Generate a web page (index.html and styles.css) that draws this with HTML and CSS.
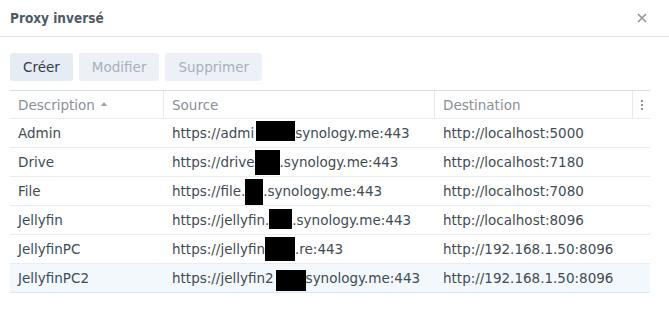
FILE: index.html
```html
<html>
<head>
  <title>Proxy inversé</title>
  <link rel="stylesheet" href="styles.css">
</head>
<body>
  <div class="dialog">
    <div class="header">
      <span class="title">Proxy inversé</span>
      <span class="close">
        <svg width="10" height="10" viewBox="0 0 10 10"><path d="M1 1L9 9M9 1L1 9" stroke="#8d939b" stroke-width="1.6"/></svg>
      </span>
    </div>

    <div class="toolbar">
      <button class="btn">Créer</button>
      <button class="btn disabled">Modifier</button>
      <button class="btn disabled">Supprimer</button>
    </div>

    <div class="grid">
      <div class="row head">
        <div class="cell c1">Description <span class="sort"></span></div>
        <div class="cell c2">Source</div>
        <div class="cell c3">Destination</div>
        <div class="cell c4"><span class="dots"><i></i><i></i><i></i></span></div>
      </div>
      <div class="row">
        <div class="cell c1">Admin</div>
        <div class="cell c2">https://admi<span class="mask m1"></span>synology.me:443</div>
        <div class="cell c3">http://localhost:5000</div>
        <div class="cell c4"></div>
      </div>
      <div class="row">
        <div class="cell c1">Drive</div>
        <div class="cell c2">https://drive<span class="mask m2"></span>.synology.me:443</div>
        <div class="cell c3">http://localhost:7180</div>
        <div class="cell c4"></div>
      </div>
      <div class="row">
        <div class="cell c1">File</div>
        <div class="cell c2">https://file.<span class="mask m3"></span>.synology.me:443</div>
        <div class="cell c3">http://localhost:7080</div>
        <div class="cell c4"></div>
      </div>
      <div class="row">
        <div class="cell c1">Jellyfin</div>
        <div class="cell c2">https://jellyfin.<span class="mask m4"></span>.synology.me:443</div>
        <div class="cell c3">http://localhost:8096</div>
        <div class="cell c4"></div>
      </div>
      <div class="row">
        <div class="cell c1">JellyfinPC</div>
        <div class="cell c2">https://jellyfin<span class="mask m5"></span>.re:443</div>
        <div class="cell c3">http://192.168.1.50:8096</div>
        <div class="cell c4"></div>
      </div>
      <div class="row selected">
        <div class="cell c1">JellyfinPC2</div>
        <div class="cell c2">https://jellyfin2<span class="mask m6"></span>synology.me:443</div>
        <div class="cell c3">http://192.168.1.50:8096</div>
        <div class="cell c4"></div>
      </div>
    </div>
  </div>
</body>
</html>
```

FILE: styles.css
```css
html, body { margin:0; padding:0; background:#fff; }

body { font-family:"DejaVu Sans", Verdana, sans-serif; font-size:13.5px; color:#414b55; }

.dialog { width:669px; height:315px; }

.header {
  height:37px;
  border-bottom:1px solid #dde4ec;
  display:flex;
  align-items:center;
  justify-content:space-between;
  padding:0 22px 0 10px;
  box-sizing:border-box;
}
.title { font-family:"DejaVu Sans Condensed", "DejaVu Sans", sans-serif; font-weight:bold; font-size:13.5px; color:#505a64; }
.close { display:flex; width:10px; height:10px; }

.toolbar { display:flex; gap:6px; padding:16px 10px 0 10px; height:28px; }
.btn {
  font-family:"DejaVu Sans", sans-serif;
  font-size:13.5px;
  height:28px;
  border:none;
  border-radius:3px;
  background:#e6ecf4;
  color:#333c46;
  padding:0 13px;
}
.btn.disabled { color:#a8b0ba; background:#edf1f7; }

.grid { margin:9px 19px 0 10px; border-top:1px solid #d5e0eb; }
.row { display:flex; height:28px; border-bottom:1px solid #e9edf2; align-items:center; }
.row.head { height:27px; color:#8a9099; }
.row.selected { background:#f3f8fd; border-bottom-color:#dde7f1; }
.cell { box-sizing:border-box; padding-left:8px; white-space:nowrap; height:100%; display:flex; align-items:center; }
.c1 { width:154px; }
.c2 { width:271px; }
.c3 { width:198px; }
.c4 { width:17px; padding-left:0; justify-content:center; }
.head .cell { border-right:1px solid #e6ebf0; }
.head .c4 { border-right:none; }

.sort {
  display:inline-block;
  width:0; height:0;
  margin-left:6px;
  border-left:3px solid transparent;
  border-right:3px solid transparent;
  border-bottom:4px solid #9aa1aa;
  position:relative; top:-1px;
}

.dots { display:flex; flex-direction:column; gap:2px; }
.dots i { display:block; width:2px; height:2px; background:#8a9099; }

.mask { display:inline-block; background:#000; position:relative; }
.m1 { width:39px; height:20px; top:-2px; margin-left:2px; }
.m2 { width:25px; height:25px; top:0; }
.m3 { width:18px; height:26px; top:1px; }
.m4 { width:23px; height:20px; top:-1px; }
.m5 { width:30px; height:24px; top:0; }
.m6 { width:30px; height:21px; top:2px; margin-left:2px; }
```
